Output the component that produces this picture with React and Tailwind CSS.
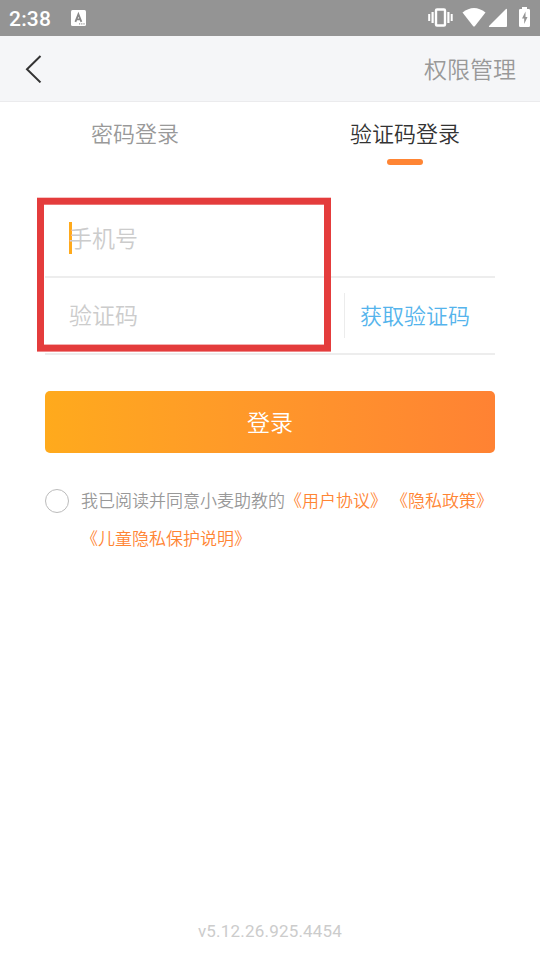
function StatusBar() {
  return (
    <div className="flex h-9 items-center bg-[#949494] text-white">
      <span className="ml-[9px] w-[62px] pt-0.5 text-[21px] font-medium leading-9 tracking-[0.2px]">2:38</span>
      <svg width="15" height="16" viewBox="0 0 15 16">
        <rect width="15" height="16" rx="1.5" fill="#fff" />
        <path d="M4.4 11.8L7.4 4.2L10.4 11.8M5.2 9.3H9.6" fill="none" stroke="#888" strokeWidth="1.8" />
        <path d="M8 13.2h1.2v1.2H8zM10.2 13.2h1.2v1.2h-1.2zM12.4 13.2h1.2v1.2h-1.2z" fill="#949494" />
      </svg>
      <svg className="ml-auto" width="112" height="36" viewBox="428 0 112 36" fill="#fff">
        <rect x="436" y="9.5" width="9" height="16" rx="1" fill="none" stroke="#fff" strokeWidth="2.4" />
        <path d="M428.2 14h2v7h-2zM431.5 12h2.2v11h-2.2zM447.3 12h2.2v11h-2.2zM450.7 14h2v7h-2z" />
        <path d="M462.5 12.5Q474 3.5 485.5 12.5L475 26Q474 27 473 26Z" />
        <path d="M507 10v16q0 1-1 1h-16q-2 0-.5-1.5l16-16q1.500-1.500 1.500.500z" />
        <path d="M520.3 9H522V7h5v2h1.7q1.3 0 1.3 1.3v15.4q0 1.3-1.3 1.3h-8.4q-1.3 0-1.3-1.3V10.3Q519 9 520.3 9z" />
        <path d="M525.5 11.5L522 18.5h2.2V24l3.3-7h-2z" fill="#949494" />
      </svg>
    </div>
  );
}

export default function App() {
  return (
    <div className="relative flex h-[960px] w-[540px] flex-col overflow-hidden bg-white font-['Roboto','Noto_Sans_CJK_SC',sans-serif] [text-spacing-trim:space-all]">
      <StatusBar />
      <header className="flex h-[66px] items-center justify-between border-b border-[#ebebed] bg-[#f5f6f8] pl-[25px] pr-6">
        <svg width="18" height="28" viewBox="0 0 18 28" fill="none" stroke="#333" strokeWidth="2">
          <path d="M15.5 1L2 14.2L15.5 27.4" />
        </svg>
        <span className="pb-px font-['Noto_Sans_CJK_SC',sans-serif] text-[23px] font-[350] leading-8 text-[#999]">权限管理</span>
      </header>
      <nav className="grid h-[98px] grid-cols-2 pt-3.5 text-center font-['Noto_Sans_CJK_SC',sans-serif] text-[22px] font-[350] leading-8">
        <span className="text-[#999]">密码登录</span>
        <div className="flex flex-col items-center text-[#333]">
          <span>验证码登录</span>
          <span className="mt-[11px] h-1.5 w-9 rounded-full bg-[#ff8534]" />
        </div>
      </nav>
      <main className="flex flex-col px-[45px] font-['Noto_Sans_CJK_SC',sans-serif]">
        <div className="flex h-[78px] items-center border-b-2 border-[#ededed] pl-6">
          <span className="h-8 w-[3px] bg-[#ffaa1c]" />
          <span className="-ml-[3px] pb-[3px] text-[23px] font-[350] leading-8 text-[#ccc]">手机号</span>
        </div>
        <div className="flex h-[77px] items-center border-b-2 border-[#ededed] pl-6">
          <span className="w-[275px] pb-1 text-[23px] font-[350] leading-8 text-[#ccc]">验证码</span>
          <span className="h-[45px] w-px bg-[#ececec]" />
          <span className="ml-[15px] pb-1 text-[22px] font-[350] leading-8 text-[#55b4ec]">获取验证码</span>
        </div>
        <button className="mt-9 h-[62px] rounded-[5px] bg-linear-to-r from-[#ffaa1c] to-[#ff8233] pb-[3px] text-[23px] font-[350] leading-8 text-white">登录</button>
        <div className="mt-7 flex text-[17px] font-[350] leading-[38px] text-[#999]">
          <span className="mt-2 mr-3 size-6 shrink-0 rounded-full border border-[#bbb]" />
          <p className="whitespace-nowrap">
            我已阅读并同意小麦助教的<span className="text-[#ff8534]">《用户协议》<span className="ml-1">《隐私政策》</span><br />《儿童隐私保护说明》</span>
          </p>
        </div>
      </main>
      <footer className="mt-auto mb-[17px] text-center text-[17px] leading-6 tracking-[0.2px] text-[#ccc]">v5.12.26.925.4454</footer>
      <svg className="absolute left-[37px] top-[197px]" width="294" height="156" viewBox="0 0 294 156" fill="none">
        <rect x="3.5" y="4.2" width="287" height="146.9" stroke="#e43c3c" strokeWidth="7" />
      </svg>
    </div>
  );
}
